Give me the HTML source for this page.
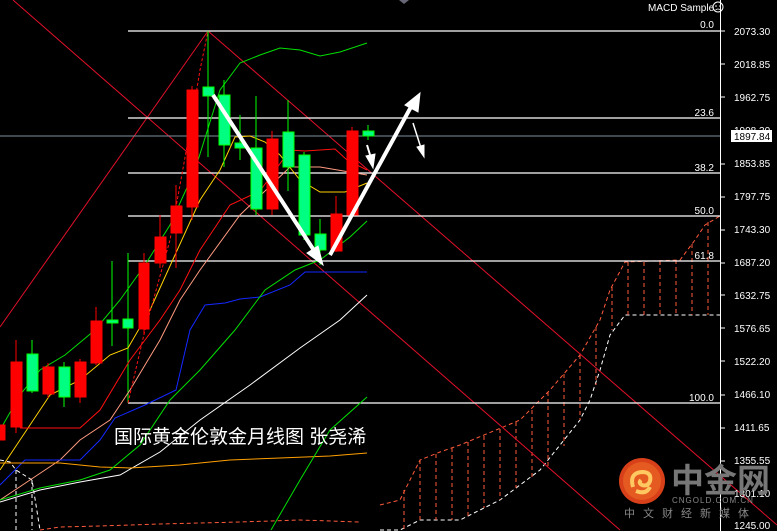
<!DOCTYPE html>
<html><head><meta charset="utf-8"><style>
html,body{margin:0;padding:0;background:#000;width:777px;height:531px;overflow:hidden}
svg{display:block}
text{font-family:"Liberation Sans","Noto Sans CJK SC",sans-serif}
</style></head><body>
<svg width="777" height="531" viewBox="0 0 777 531" xmlns="http://www.w3.org/2000/svg">
<rect width="777" height="531" fill="#000"/>
<!-- cloud -->
<g fill="none" stroke-dasharray="4,3" stroke-width="1">
<polyline stroke="#ff5a3c" points="380,505 400,500 420,460 440,452 460,445 520,420 550,390 580,355 600,320 610,290 625,262 680,260 695,240 705,225 720,216"/>
<polyline stroke="#fff" points="380,530 400,530 420,520 460,520 500,500 540,470 580,420 590,400 600,370 610,335 625,315 720,315"/>
<g stroke="#ff5a3c">
<line x1="404" y1="490" x2="404" y2="530"/><line x1="420" y1="460" x2="420" y2="520"/><line x1="436" y1="454" x2="436" y2="520"/><line x1="452" y1="448" x2="452" y2="520"/><line x1="468" y1="442" x2="468" y2="516"/><line x1="484" y1="436" x2="484" y2="508"/><line x1="500" y1="429" x2="500" y2="500"/><line x1="516" y1="422" x2="516" y2="488"/><line x1="532" y1="410" x2="532" y2="478"/><line x1="548" y1="392" x2="548" y2="466"/><line x1="564" y1="374" x2="564" y2="446"/><line x1="580" y1="355" x2="580" y2="420"/><line x1="596" y1="327" x2="596" y2="385"/><line x1="612" y1="287" x2="612" y2="330"/><line x1="628" y1="262" x2="628" y2="315"/><line x1="644" y1="262" x2="644" y2="315"/><line x1="660" y1="261" x2="660" y2="315"/><line x1="676" y1="260" x2="676" y2="315"/><line x1="692" y1="244" x2="692" y2="315"/><line x1="708" y1="222" x2="708" y2="315"/>
<polyline points="40,530 60,527 100,526 160,524 240,522 300,520 360,522"/>
</g>
<g stroke="#fff">
<polyline points="0,460 10,462 16,470 32,480 40,530"/>
<line x1="16" y1="470" x2="16" y2="530"/><line x1="32" y1="480" x2="32" y2="530"/>
</g>
</g>
<!-- red diagonals -->
<g stroke="#e0102a" stroke-width="1" fill="none">
<line x1="0" y1="327" x2="208" y2="31"/>
<line x1="208" y1="31" x2="777" y2="525"/>
<line x1="13" y1="0" x2="620" y2="530"/>
</g>
<!-- fib lines -->
<g stroke="#fff" stroke-width="1.3">
<line x1="128" y1="31" x2="720" y2="31"/>
<line x1="128" y1="118" x2="720" y2="118"/>
<line x1="128" y1="173" x2="720" y2="173"/>
<line x1="128" y1="216" x2="720" y2="216"/>
<line x1="128" y1="261" x2="720" y2="261"/>
<line x1="128" y1="403" x2="720" y2="403"/>
</g>
<line x1="0" y1="136" x2="720" y2="136" stroke="#8090a0" stroke-width="1"/>
<line x1="128" y1="253" x2="128" y2="403" stroke="#00ff00" stroke-width="1"/>
<!-- MAs -->
<g fill="none" stroke-width="1">
<polyline stroke="#00e000" points="0,430 20,395 40,370 65,355 95,330 120,300 145,265 170,225 195,170 220,90 240,63 260,55 280,48 300,50 320,56 340,52 367,43"/>
<polyline stroke="#ffd000" points="0,470 20,440 50,395 80,380 110,355 128,348 150,310 175,255 200,200 220,170 235,137 250,136 265,142 280,155 300,180 320,192 345,192 367,183"/>
<polyline stroke="#ff1010" points="20,428 80,428 100,410 130,360 160,320 180,290 200,250 230,205 260,191 290,150 305,151 335,149 347,160 367,170"/>
<polyline stroke="#ff9a80" points="0,500 30,480 60,460 80,440 110,420 130,390 160,340 180,300 200,270 240,215 290,167 320,167 367,175"/>
<polyline stroke="#1428ff" points="0,485 25,460 80,460 100,440 115,418 145,405 176,390 190,330 205,305 225,303 240,299 260,297 290,285 305,272 367,272"/>
<polyline stroke="#fff" points="0,502 40,490 80,482 120,475 160,452 200,420 250,385 300,348 340,320 367,295"/>
<polyline stroke="#ffa000" points="0,463 60,463 100,467 130,468 180,465 230,460 280,458 330,456 367,453"/>
<polyline stroke="#00e000" points="0,500 40,488 80,480 110,470 140,445 170,400 200,370 235,330 265,290 295,270 320,260 350,237 367,221"/>
<polyline stroke="#00e000" points="271,530 300,480 330,430 367,397"/>
<polyline stroke="#ff1010" stroke-dasharray="3,2" points="128,403 145,330 170,240 190,130 200,70 208,31"/>
</g>
<!-- candles -->
<g stroke-width="1">
<g stroke="#ff0000" fill="#ff0000">
<rect x="0" y="425" width="5" height="15"/>
<line x1="16" y1="340" x2="16" y2="433"/><rect x="11" y="362" width="11" height="65"/>
<line x1="48" y1="363" x2="48" y2="398"/><rect x="43" y="367" width="11" height="27"/>
<line x1="80" y1="359" x2="80" y2="403"/><rect x="75" y="362" width="11" height="35"/>
<line x1="96" y1="307" x2="96" y2="365"/><rect x="91" y="321" width="11" height="42"/>
<line x1="144" y1="253" x2="144" y2="335"/><rect x="139" y="263" width="10" height="66"/>
<line x1="160" y1="215" x2="160" y2="268"/><rect x="155" y="237" width="11" height="26"/>
<line x1="176" y1="185" x2="176" y2="268"/><rect x="171" y="206" width="11" height="27"/>
<line x1="192" y1="86" x2="192" y2="220"/><rect x="187" y="90" width="11" height="117"/>
<line x1="272" y1="131" x2="272" y2="215"/><rect x="267" y="139" width="11" height="70"/>
<line x1="336" y1="196" x2="336" y2="252"/><rect x="331" y="214" width="11" height="37"/>
<line x1="352" y1="127" x2="352" y2="216"/><rect x="347" y="131" width="11" height="84"/>
</g>
<g stroke="#00ff00" fill="#00ff80">
<line x1="32" y1="340" x2="32" y2="393"/><rect x="27" y="354" width="11" height="37"/>
<line x1="64" y1="362" x2="64" y2="407"/><rect x="59" y="367" width="11" height="30"/>
<line x1="112" y1="261" x2="112" y2="346"/><rect x="107" y="320" width="11" height="3"/>
<rect x="123" y="319" width="10" height="9"/>
<line x1="208" y1="31" x2="208" y2="157"/><rect x="203" y="87" width="11" height="9"/>
<line x1="224" y1="80" x2="224" y2="167"/><rect x="219" y="95" width="11" height="50"/>
<line x1="240" y1="115" x2="240" y2="160"/><rect x="235" y="143" width="11" height="5"/>
<line x1="256" y1="96" x2="256" y2="215"/><rect x="251" y="148" width="11" height="61"/>
<line x1="288" y1="100" x2="288" y2="191"/><rect x="283" y="132" width="11" height="35"/>
<line x1="304" y1="152" x2="304" y2="240"/><rect x="299" y="155" width="11" height="80"/>
<line x1="320" y1="219" x2="320" y2="265"/><rect x="315" y="234" width="11" height="16"/>
<line x1="368" y1="125" x2="368" y2="140"/><rect x="363" y="131" width="11" height="5"/>
</g>
</g>
<!-- arrows -->
<g stroke="#fff" fill="#fff">
<line x1="213" y1="95" x2="315" y2="252" stroke-width="4"/>
<polygon points="323,265 307,253 318,246"/>
<line x1="330" y1="255" x2="412" y2="105" stroke-width="4"/>
<polygon points="420,93 418,112 405,105"/>
<line x1="367" y1="145" x2="371" y2="158" stroke-width="2"/>
<polygon points="373,168 366,156 375,154"/>
<line x1="413" y1="123" x2="421" y2="148" stroke-width="1.5"/>
<polygon points="424,157 417,147 424,145"/>
</g>
<!-- axis -->
<line x1="720.5" y1="0" x2="720.5" y2="531" stroke="#fff"/>
<g fill="#fff" font-size="10" text-anchor="end">
<text x="714" y="28">0.0</text><text x="714" y="116">23.6</text><text x="714" y="171">38.2</text><text x="714" y="214">50.0</text><text x="714" y="259">61.8</text><text x="714" y="401">100.0</text>
</g>
<g fill="#fff" font-size="10">
<text x="734" y="35">2073.30</text><text x="734" y="68">2018.85</text><text x="734" y="101">1962.75</text><text x="734" y="134">1908.30</text>
<text x="734" y="167">1853.85</text><text x="734" y="200">1797.75</text><text x="734" y="233">1743.30</text><text x="734" y="266">1687.20</text>
<text x="734" y="299">1632.75</text><text x="734" y="332">1576.65</text><text x="734" y="365">1522.20</text><text x="734" y="398">1466.10</text>
<text x="734" y="431">1411.65</text><text x="734" y="464">1355.55</text><text x="734" y="497">1301.10</text><text x="734" y="529">1245.00</text>
</g>
<rect x="731" y="130" width="41" height="12" fill="#fff"/>
<text x="734" y="140" font-size="10" fill="#000">1897.84</text>
<g stroke="#fff" stroke-width="1"><line x1="721" y1="31" x2="725" y2="31"/><line x1="721" y1="64" x2="725" y2="64"/><line x1="721" y1="97" x2="725" y2="97"/><line x1="721" y1="164" x2="725" y2="164"/><line x1="721" y1="197" x2="725" y2="197"/><line x1="721" y1="230" x2="725" y2="230"/><line x1="721" y1="263" x2="725" y2="263"/><line x1="721" y1="295" x2="725" y2="295"/><line x1="721" y1="328" x2="725" y2="328"/><line x1="721" y1="361" x2="725" y2="361"/><line x1="721" y1="395" x2="725" y2="395"/><line x1="721" y1="428" x2="725" y2="428"/><line x1="721" y1="461" x2="725" y2="461"/><line x1="721" y1="493" x2="725" y2="493"/></g>
<text x="648" y="11" font-size="10" fill="#fff">MACD Sample</text>
<circle cx="718" cy="7" r="5" fill="none" stroke="#fff"/>
<circle cx="716" cy="6" r="0.8" fill="#fff"/><circle cx="720" cy="6" r="0.8" fill="#fff"/>
<path d="M715.5 10 Q718 8 720.5 10" fill="none" stroke="#fff" stroke-width="0.8"/>
<polygon points="399,0 409,0 404,4" fill="#667"/>
<!-- title -->
<text x="114" y="443" font-size="19" fill="#fff">国际黄金伦敦金月线图 张尧浠</text>
<!-- logo -->
<circle cx="642" cy="481" r="23" fill="#d8401a"/>
<circle cx="642" cy="481" r="19" fill="#e55a20"/>
<path d="M633 487 q-4 -14 9 -15 q10 0 8 9 q-2 6 -8 4 q-4 -2 -1 -5 M636 491 q10 4 14 -4" fill="none" stroke="#ffc860" stroke-width="4"/>
<text x="671" y="492" font-size="33" font-weight="bold" fill="#777">中金网</text>
<text x="672" y="503" font-size="8" fill="#888" letter-spacing="1">CNGOLD.COM.CN</text>
<text x="624" y="517" font-size="11" fill="#888" letter-spacing="8">中文财经新媒体</text>
</svg>
</body></html>
